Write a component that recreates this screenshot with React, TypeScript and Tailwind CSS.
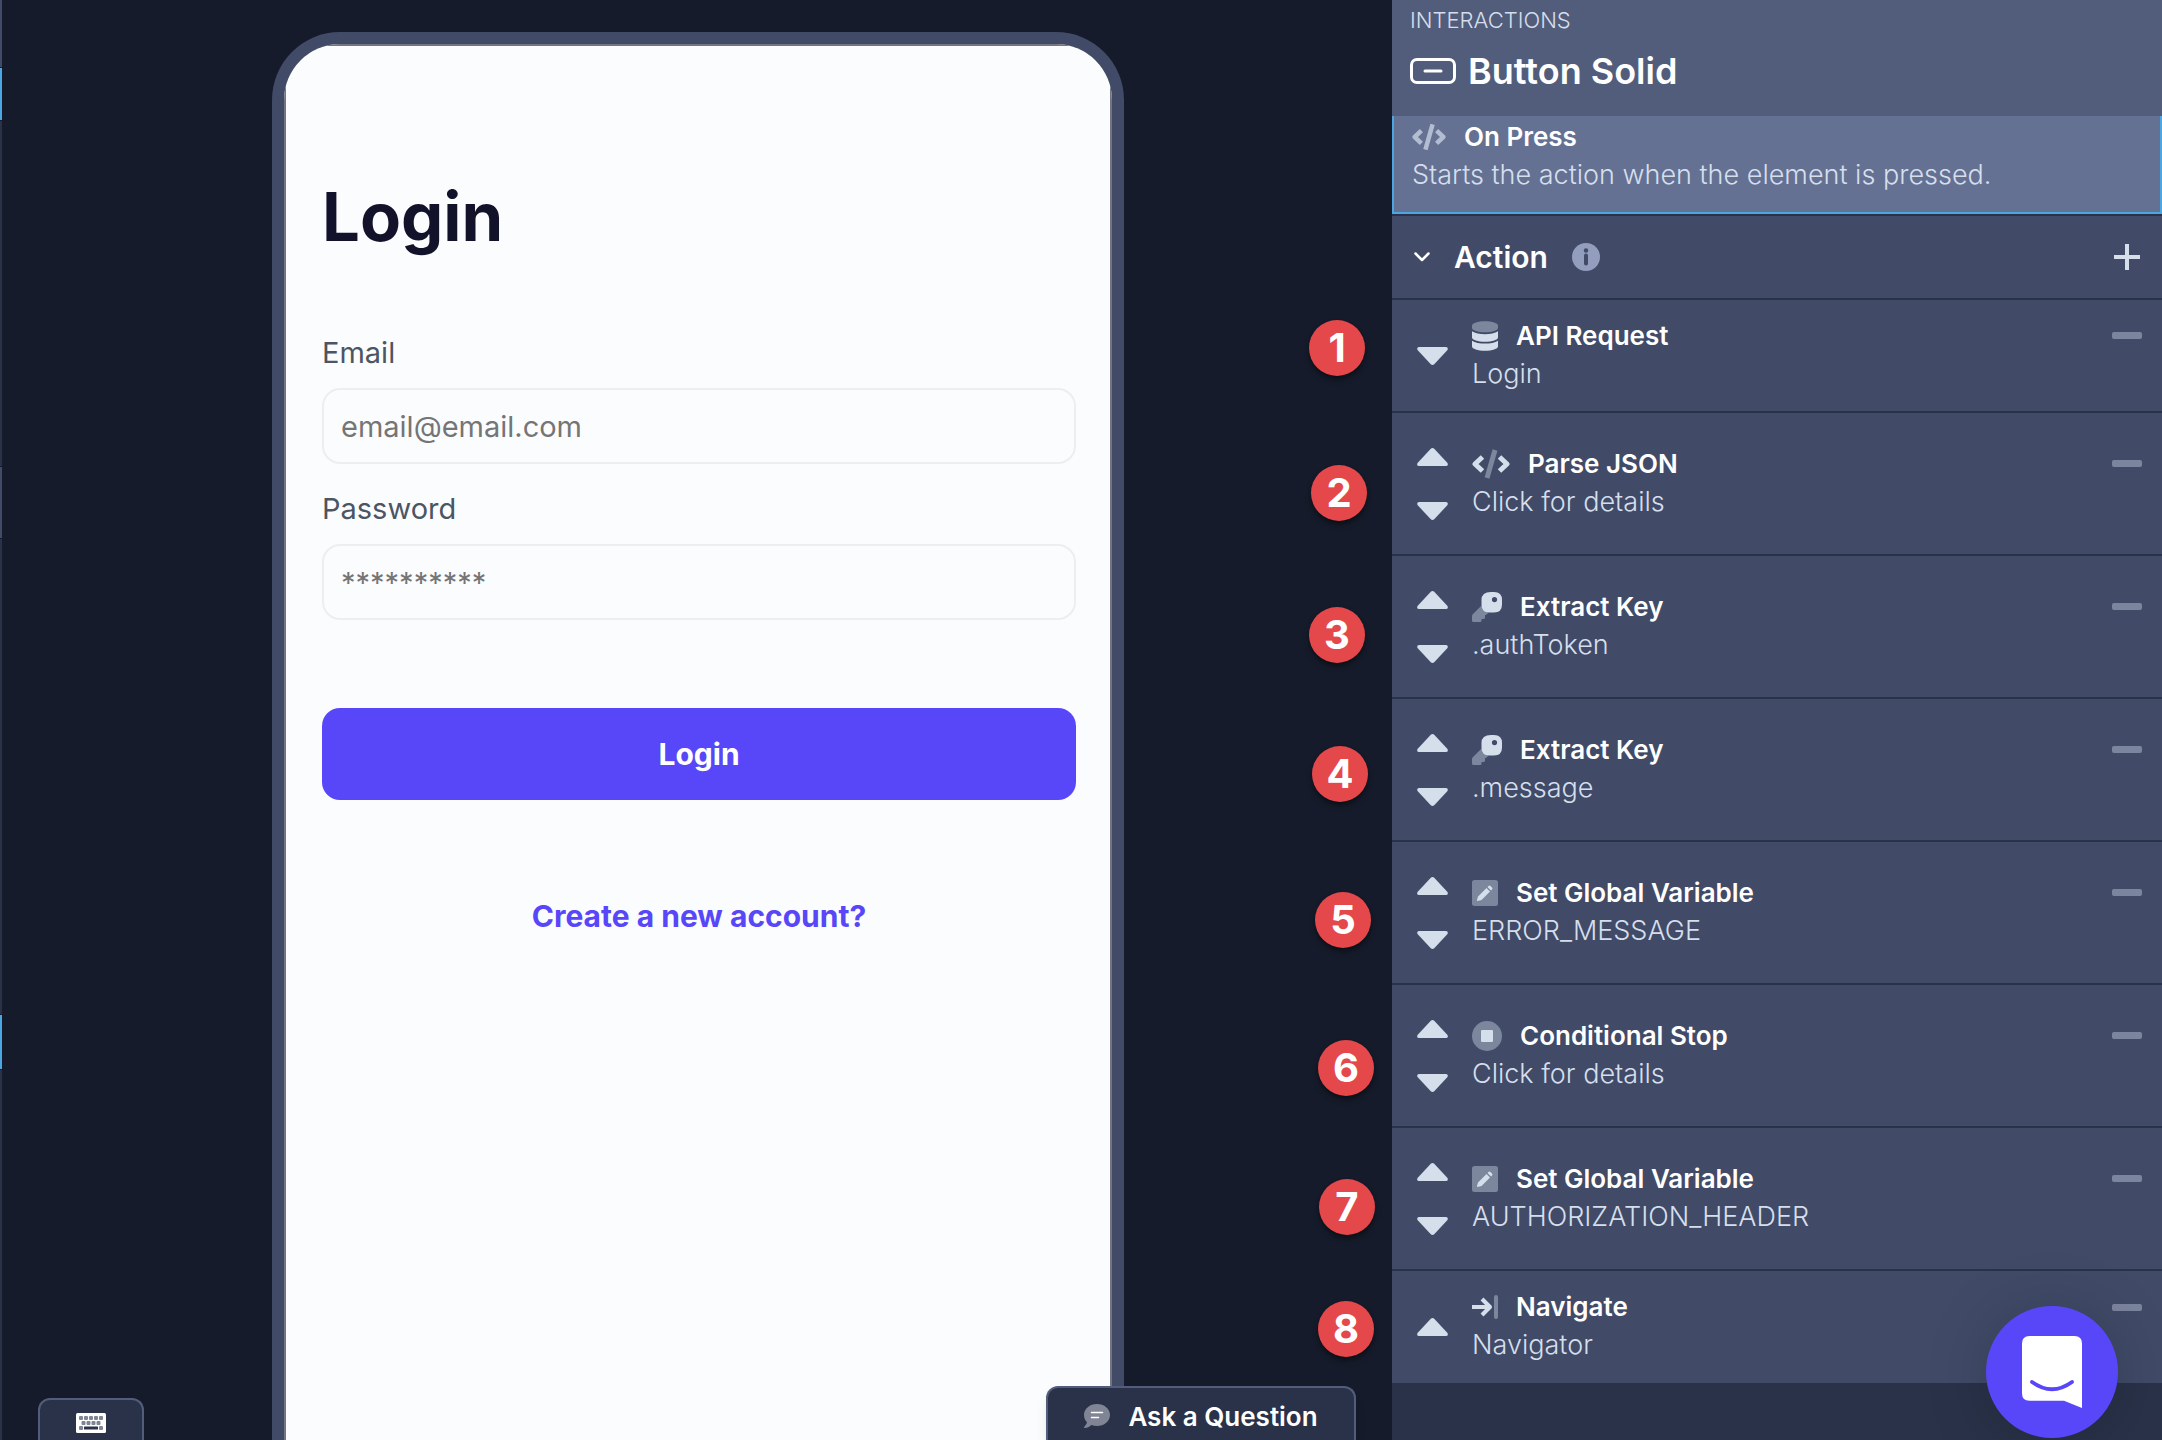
import React from "react";

type IconProps = { className?: string };

const DatabaseIcon: React.FC<IconProps> = ({ className }) => (
  <svg viewBox="0 0 448 512" fill="currentColor" className={className}>
    <path
      opacity=".4"
      d="M448 73v46c0 40-100 73-224 73S0 159 0 119V73C0 33 100 0 224 0s224 33 224 73z"
    />
    <path d="M448 176v104c0 40-100 73-224 73S0 320 0 280V176c48 33 136 49 224 49s176-16 224-49zM448 336v103c0 40-100 73-224 73S0 479 0 439V336c48 33 136 49 224 49s176-16 224-49z" />
  </svg>
);

const CodeIcon: React.FC<IconProps & { solid?: boolean }> = ({ className, solid }) => (
  <svg
    viewBox="0 0 38 30"
    fill="none"
    stroke="currentColor"
    strokeWidth="5"
    strokeLinejoin="round"
    className={className}>
    <path opacity={solid ? 1 : 0.4} d="M23 1 15 29" />
    <path d="M10.500 8 3 15l7.500 7M27.500 8l7.500 7-7.500 7" />
  </svg>
);

const KeyIcon: React.FC<IconProps> = ({ className }) => (
  <svg viewBox="0 0 30 30" fill="currentColor" className={className}>
    <path
      opacity=".4"
      d="M10 13 1 22q-1 1-1 2v4.500Q0 30 1.500 30H8q1.500 0 1.500-1.500V27h2q1.500 0 1.500-1.500V23h1l3-3z"
    />
    <path
      fillRule="evenodd"
      d="M19 0h3q8 0 8 8v4.500q0 8-8 8h-4.500q-8 0-8-8V8q0-8 9.500-8zM22.500 5a2.600 2.600 0 1 0 0 5.200 2.600 2.600 0 0 0 0-5.200z"
    />
  </svg>
);

const PenSquareIcon: React.FC<IconProps> = ({ className }) => (
  <svg viewBox="0 0 26 26" fill="currentColor" className={className}>
    <rect opacity=".4" width="26" height="26" rx="2.500" />
    <path d="M14.500 8 18 11.500 9.500 20 5.500 21q-.7 0-.5-1L6 16.500zM15.500 7l1-1q1-1 2 0l1.500 1.500q1 1 0 2l-1 1z" />
  </svg>
);

const StopIcon: React.FC<IconProps> = ({ className }) => (
  <svg viewBox="0 0 30 30" fill="currentColor" className={className}>
    <circle opacity=".4" cx="15" cy="15" r="15" />
    <rect x="9" y="9" width="12" height="12" rx="1" />
  </svg>
);

const NavigateIcon: React.FC<IconProps> = ({ className }) => (
  <svg
    viewBox="0 0 26 24"
    fill="none"
    stroke="currentColor"
    strokeWidth="4"
    className={className}>
    <path opacity=".4" d="M24 2v20" strokeLinecap="round" />
    <path d="M0 12h17M10 4l8 8-8 8" strokeLinejoin="round" />
  </svg>
);

const Triangle: React.FC<IconProps> = ({ className }) => (
  <svg viewBox="0 0 31 18" fill="currentColor" className={className}>
    <path d="M13.800.7q1.700-1.400 3.400 0L30.500 15q1 3-1.500 3H2q-2.500 0-1.500-3z" />
  </svg>
);

const ButtonSolidIcon: React.FC<IconProps> = ({ className }) => (
  <svg
    viewBox="0 0 46 26"
    fill="none"
    stroke="currentColor"
    strokeWidth="3"
    strokeLinecap="round"
    className={className}>
    <rect x="1.500" y="1.500" width="43" height="23" rx="5.500" />
    <path d="M15 13h16" />
  </svg>
);

const InfoIcon: React.FC<IconProps> = ({ className }) => (
  <svg viewBox="0 0 28 28" className={className}>
    <circle cx="14" cy="14" r="14" fill="#939dbd" />
    <circle cx="14" cy="7.500" r="2.200" fill="#414b68" />
    <path d="M14 12.500v8" stroke="#414b68" strokeWidth="4" strokeLinecap="round" />
  </svg>
);

const KeyboardIcon: React.FC<IconProps> = ({ className }) => (
  <svg viewBox="0 0 30 20" className={className}>
    <rect width="30" height="20" rx="1.500" fill="#fff" />
    <g fill="#7f8594">
      {[3, 8, 13, 18, 23].map((x) => (
        <rect key={x} x={x} y="3" width="4" height="4" rx="1" />
      ))}
      {[5.5, 10.5, 15.5, 20.5].map((x) => (
        <rect key={x} x={x} y="8" width="4" height="4" rx="1" />
      ))}
      <rect x="3" y="13" width="4" height="4" rx="1" />
      <rect x="23" y="13" width="4" height="4" rx="1" />
    </g>
    <rect x="8" y="13.500" width="14" height="3" rx=".5" fill="#293249" />
  </svg>
);

const CommentIcon: React.FC<IconProps> = ({ className }) => (
  <svg viewBox="0 0 26 24" className={className}>
    <path
      fill="#7f8594"
      d="M13 0c7.200 0 13 4.900 13 11s-5.800 11-13 11c-2 0-3.900-.4-5.600-1.100C5.500 22.500 3 24 .5 24c-.5 0-.7-.5-.3-1 1.300-1.400 2.300-3 2.800-4.700C1.100 16.400 0 13.800 0 11 0 4.900 5.800 0 13 0z"
    />
    <path d="M7.500 8.500h11M7.500 13.500h7" stroke="#fff" strokeWidth="1.500" strokeLinecap="round" />
  </svg>
);

const MessengerIcon: React.FC<IconProps> = ({ className }) => (
  <svg viewBox="0 0 60 72" className={className}>
    <path
      fill="#fff"
      d="M7.500 0h45Q60 0 60 7.500V72l-18-7.300H7.500Q0 64.700 0 57.200V7.500Q0 0 7.500 0z"
    />
    <path
      d="M10 46q20 14.500 40 0"
      fill="none"
      stroke="#5847f9"
      strokeWidth="4"
      strokeLinecap="round"
    />
  </svg>
);

const actions = [
  { title: "API Request", detail: "Login", icon: DatabaseIcon, iconSize: "w-[26px] h-[30px]" },
  { title: "Parse JSON", detail: "Click for details", icon: CodeIcon, iconSize: "w-[38px] h-[30px]" },
  { title: "Extract Key", detail: ".authToken", icon: KeyIcon, iconSize: "w-[30px] h-[30px]" },
  { title: "Extract Key", detail: ".message", icon: KeyIcon, iconSize: "w-[30px] h-[30px]" },
  { title: "Set Global Variable", detail: "ERROR_MESSAGE", icon: PenSquareIcon, iconSize: "w-[26px] h-[26px]" },
  { title: "Conditional Stop", detail: "Click for details", icon: StopIcon, iconSize: "w-[30px] h-[30px]" },
  { title: "Set Global Variable", detail: "AUTHORIZATION_HEADER", icon: PenSquareIcon, iconSize: "w-[26px] h-[26px]" },
  { title: "Navigate", detail: "Navigator", icon: NavigateIcon, iconSize: "w-[26px] h-[24px]" },
];

// Step markers pinned on the canvas next to the action list
const steps = [
  "top-[320px] right-[27px]",
  "top-[465px] right-[25px]",
  "top-[607px] right-[27px]",
  "top-[746px] right-[24px]",
  "top-[892px] right-[21px]",
  "top-[1040px] right-[18px]",
  "top-[1179px] right-[17px]",
  "top-[1301px] right-[18px]",
];

const LeftEdge: React.FC = () => (
  <div className="w-[2px] shrink-0 flex flex-col gap-px">
    <div className="h-[67px] bg-[#414b68]" />
    <div className="h-[52px] bg-[#4ba6e2]" />
    <div className="h-[345px] bg-[#293249]" />
    <div className="h-[71px] bg-[#414b68]" />
    <div className="h-[475px] bg-[#293249]" />
    <div className="h-[54px] bg-[#4ba6e2]" />
    <div className="flex-1 bg-[#293249]" />
  </div>
);

const PhonePreview: React.FC = () => (
  <div className="w-[852px] mt-8 border-12 border-b-0 border-[#414b68] rounded-t-[68px] overflow-hidden bg-[#414b68] flex">
    <form
      className="flex-1 flex flex-col border-2 border-b-0 border-[#73767f] bg-[#fbfcfe] pl-9 pr-[34px] pt-[131px]"
      onSubmit={(e) => e.preventDefault()}>
      <h1 className="text-[67px] leading-[80px] font-bold text-[#12122b] mb-[75px]">Login</h1>

      <label htmlFor="email" className="text-[29px] leading-[42px] text-[#4b5563] mb-[14px]">
        Email
      </label>
      <input
        id="email"
        type="email"
        placeholder="email@email.com"
        className="h-[76px] px-[17px] text-[29px] border-2 border-[#edeef0] rounded-[18px] bg-transparent placeholder:text-[#757575] mb-6"
      />

      <label htmlFor="password" className="text-[29px] leading-[42px] text-[#4b5563] mb-[14px]">
        Password
      </label>
      <input
        id="password"
        type="password"
        placeholder="**********"
        className="h-[76px] px-[17px] text-[29px] border-2 border-[#edeef0] rounded-[18px] bg-transparent placeholder:text-[#757575]"
      />

      <button
        type="submit"
        className="mt-[88px] h-[92px] rounded-[18px] bg-[#5847f9] text-white text-[30px] font-bold">
        Login
      </button>

      <a
        href="#signup"
        className="mt-24 self-center text-[30px] leading-10 font-bold text-[#5847f9]">
        Create a new account?
      </a>
    </form>
  </div>
);

const InteractionsPanel: React.FC = () => (
  <aside className="w-[770px] shrink-0 flex flex-col bg-[#293249]">
    <header className="h-[116px] bg-[#525d7b] px-[18px] pt-1">
      <p className="text-[22px] leading-8 font-light text-[#d5dfec]">INTERACTIONS</p>
      <div className="mt-3 flex items-center gap-3">
        <ButtonSolidIcon className="w-[46px] h-[26px] text-white" />
        <h2 className="text-[36px] leading-[46px] font-semibold text-white">Button Solid</h2>
      </div>
    </header>

    <div className="h-[98px] border-2 border-t-0 border-[#4ba6e2] bg-[#657193] px-[18px]">
      <div className="mt-[2px] flex items-center gap-[18px]">
        <CodeIcon solid className="w-[34px] h-[28px] text-[#b3bdd2]" />
        <h3 className="text-[26px] leading-[38px] font-semibold text-white">On Press</h3>
      </div>
      <p className="text-[27px] leading-[38px] font-light text-[#d5dfec]">
        Starts the action when the element is pressed.
      </p>
    </div>

    <div className="h-[86px] border-y-2 border-[#293249] bg-[#414b68] px-[22px] flex items-center">
      <svg viewBox="0 0 16 10" className="w-4 h-[10px]" fill="none" stroke="#fff" strokeWidth="2.500">
        <path d="M1.500 1.500 8 8l6.500-6.500" strokeLinecap="round" strokeLinejoin="round" />
      </svg>
      <h2 className="ml-6 text-[30px] leading-10 font-semibold text-white">Action</h2>
      <InfoIcon className="ml-6 w-7 h-7" />
      <button type="button" aria-label="Add action" className="ml-auto text-[#d5dfec]">
        <svg viewBox="0 0 26 26" className="w-[26px] h-[26px]" stroke="currentColor" strokeWidth="4">
          <path d="M13 0v26M0 13h26" />
        </svg>
      </button>
    </div>

    <ul>
      {actions.map((action, i) => {
        const Icon = action.icon;
        const first = i === 0;
        const last = i === actions.length - 1;
        return (
          <li
            key={i}
            className={`flex items-center bg-[#414b68] pl-6 pr-5 ${
              last ? "h-[112px]" : first ? "h-[113px] border-b-2" : "h-[143px] border-b-2"
            } border-[#293249]`}>
            <div className="w-8 flex flex-col items-center gap-9 text-[#d5dfec]">
              {!first && (
                <button type="button" aria-label="Move up">
                  <Triangle className="w-[31px] h-[18px]" />
                </button>
              )}
              {!last && (
                <button type="button" aria-label="Move down">
                  <Triangle className="w-[31px] h-[18px] rotate-180" />
                </button>
              )}
            </div>
            <div className="ml-6 pb-[2px] flex-1">
              <div className="flex items-center">
                <Icon className={`text-[#d5dfec] ${action.iconSize}`} />
                <h3 className="ml-[18px] text-[26px] leading-[38px] font-semibold text-white">
                  {action.title}
                </h3>
                <button
                  type="button"
                  aria-label="Remove action"
                  className="ml-auto w-[30px] h-[7px] rounded-[2px] bg-[#7c859e]"
                />
              </div>
              <p className="text-[27px] leading-[38px] font-light text-[#d5dfec]">
                {action.detail}
              </p>
            </div>
          </li>
        );
      })}
    </ul>
  </aside>
);

const App: React.FC = () => {
  return (
    <div className="h-screen flex overflow-hidden bg-[#151b2a] font-['Inter',sans-serif]">
      <LeftEdge />

      <main className="relative flex-1 flex justify-center pl-[2px]">
        <PhonePreview />

        {steps.map((position, i) => (
          <span
            key={i}
            className={`absolute ${position} size-14 rounded-full bg-[#e5484b] shadow-md shadow-black/40 flex items-center justify-center text-[40px] font-bold text-white`}>
            {i + 1}
          </span>
        ))}

        <button
          type="button"
          aria-label="Keyboard shortcuts"
          className="absolute left-9 bottom-0 w-[106px] h-[42px] pt-[13px] flex justify-center items-start border-2 border-b-0 border-[#525d7b] rounded-t-xl bg-[#293249]">
          <KeyboardIcon className="w-[30px] h-5" />
        </button>

        <button
          type="button"
          className="absolute right-9 bottom-0 w-[310px] h-[54px] flex items-center justify-center gap-[18px] pt-1 border-2 border-b-0 border-[#525d7b] rounded-t-xl bg-[#293249] shadow-lg text-[26px] font-semibold text-white">
          <CommentIcon className="w-[26px] h-6" />
          Ask a Question
        </button>
      </main>

      <InteractionsPanel />

      <button
        type="button"
        aria-label="Open chat"
        className="fixed right-11 bottom-[2px] size-[132px] rounded-full bg-[#5847f9] shadow-[0_4px_64px_rgba(0,0,0,0.2)] flex items-center justify-center">
        <MessengerIcon className="w-[60px] h-[72px]" />
      </button>
    </div>
  );
};

export default App;
